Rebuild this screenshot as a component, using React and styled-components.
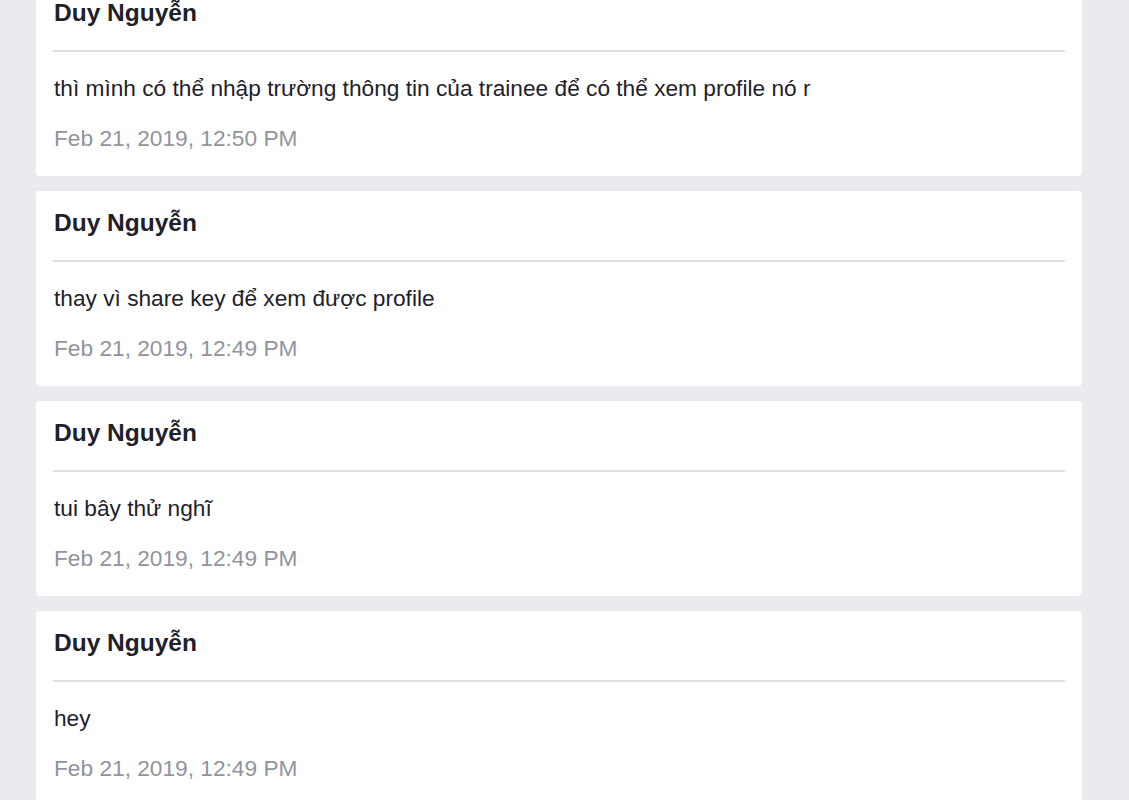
import React from 'react';
import styled, { createGlobalStyle } from 'styled-components';

const GlobalStyle = createGlobalStyle`
  html, body {
    margin: 0;
    padding: 0;
    background: #e9ebee;
    font-family: "Liberation Sans", Arial, sans-serif;
    overflow: hidden;
  }
`;

const comments = [
  { author: 'Duy Nguyễn', text: 'thì mình có thể nhập trường thông tin của trainee để có thể xem profile nó r', time: 'Feb 21, 2019, 12:50 PM' },
  { author: 'Duy Nguyễn', text: 'thay vì share key để xem được profile', time: 'Feb 21, 2019, 12:49 PM' },
  { author: 'Duy Nguyễn', text: 'tui bây thử nghĩ', time: 'Feb 21, 2019, 12:49 PM' },
  { author: 'Duy Nguyễn', text: 'hey', time: 'Feb 21, 2019, 12:49 PM' },
];

const App = () => {
  return (
    <>
      <GlobalStyle />
      <Page>
        <List>
          {comments.map((c, i) => (
            <Card key={i}>
              <Author>{c.author}</Author>
              <Message>{c.text}</Message>
              <Time>{c.time}</Time>
            </Card>
          ))}
        </List>
      </Page>
    </>
  );
};

const Page = styled.div`
  height: 800px;
  overflow: hidden;
  padding: 0 47px 0 36px;
`;

const List = styled.div`
  display: flex;
  flex-direction: column;
  gap: 15px;
  margin-top: -19px;
`;

const Card = styled.div`
  background: #fff;
  border-radius: 4px;
  height: 195px;
  box-sizing: border-box;
  padding: 17px 17px 0 17px;
  display: flex;
  flex-direction: column;
`;

const Author = styled.div`
  font-size: 24.5px;
  line-height: 30px;
  font-weight: 700;
  color: #1d2129;
  padding: 0 1px 22px;
  border-bottom: 2px solid #dddfe2;
`;

const Message = styled.div`
  font-size: 22.7px;
  line-height: 26px;
  color: #1d2129;
  padding: 0 1px;
  margin-top: 23px;
`;

const Time = styled.div`
  font-size: 22.7px;
  line-height: 26px;
  color: #90949c;
  padding: 0 1px;
  margin-top: 24px;
`;

export default App;
